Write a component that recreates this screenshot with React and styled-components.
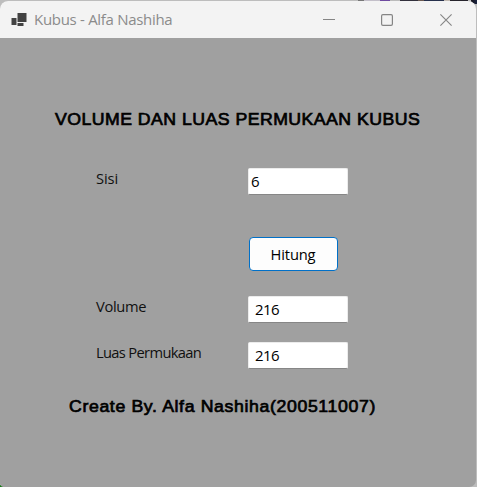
import React from "react";
import styled, { createGlobalStyle } from "styled-components";

const GlobalStyle = createGlobalStyle`
  * { box-sizing: border-box; }
  html, body { margin: 0; padding: 0; }
  body { overflow: hidden; background: #bdbdbd; }
`;

const Desktop = styled.main`
  width: 477px;
  height: 487px;
  padding: 1px 1px 0 0;
  background:
    linear-gradient(#127a12, #127a12) 0 100% / 3px 2px no-repeat,
    linear-gradient(90deg, #17141c, #1a2440) 100% 0 / 6px 4px no-repeat,
    linear-gradient(90deg, #777 0 6px, #c3bfc9 6px 22px, #6f4ba0 22px 32px, #bbb 32px 42px, #32303c 42px 60px, #6b5a52 60px 66px, #26304c 66px 86px, #c0b8b0 86px 92px, #26242c 92px 110px) 358px 0 / 110px 1px no-repeat,
    #bdbdbd;
`;

const Window = styled.section`
  display: flex;
  flex-direction: column;
  width: 476px;
  height: 486px;
  overflow: hidden;
  border-radius: 8px 8px 7px 4px;
  background: #a0a0a0;
  font-family: "Open Sans", "Noto Sans", sans-serif;
`;

const TitleBar = styled.header`
  display: flex;
  align-items: center;
  flex: none;
  height: 37px;
  padding: 0 1px 0 10px;
  background: #f3f3f3;
  color: #8b8b8b;
`;

const AppIcon = styled.svg`
  flex: none;
  width: 17px;
  height: 16px;
  margin-right: 7px;
`;

const Caption = styled.h1`
  flex: 1;
  margin: 0;
  padding-bottom: 2px;
  font-size: 15px;
  font-weight: 400;
  line-height: 20px;
  letter-spacing: -0.3px;
  white-space: nowrap;
`;

const WindowButton = styled.button`
  display: grid;
  place-items: center;
  width: 58.5px;
  height: 37px;
  padding: 0;
  border: 0;
  background: transparent;
  color: #858585;
`;

const Form = styled.form`
  display: flex;
  flex-direction: column;
  flex: 1;
`;

const Heading = styled.div`
  height: 20px;
  margin: ${(p) => p.$margin};
  color: #000;
  font-family: "Liberation Sans", Arial, sans-serif;
  font-size: 17px;
  font-weight: 400;
  line-height: 20px;
  letter-spacing: ${(p) => p.$spacing}px;
  -webkit-text-stroke: 0.7px #000;
  white-space: nowrap;
  transform: scaleX(1.04);
  transform-origin: 0 0;
`;

const Row = styled.div`
  display: grid;
  grid-template-columns: 152px 100px;
  height: 27px;
  margin: ${(p) => p.$top}px 0 0 96px;
`;

const Label = styled.label`
  color: #101010;
  font-size: 14.7px;
  line-height: 20px;
  letter-spacing: ${(p) => p.$spacing}px;
  white-space: nowrap;
`;

const Field = styled.input`
  width: 100px;
  height: 27px;
  padding: 0 0 2px ${(p) => p.$indent}px;
  border: 1px solid #ececec;
  border-bottom-color: #868686;
  border-radius: 2px;
  outline: 0;
  background: #fff;
  color: #000;
  font: 15px "Open Sans", sans-serif;
  letter-spacing: -0.6px;
`;

const SubmitButton = styled.button`
  width: 89px;
  height: 34px;
  margin: 42px 0 0 249px;
  padding: 0 1px 1px 0;
  border: 1px solid #0070c8;
  border-radius: 4px;
  background: #fdfdfd;
  color: #000;
  font: 14.7px "Open Sans", sans-serif;
  letter-spacing: -0.15px;
`;

export default function App() {
  return (
    <>
      <GlobalStyle />
      <Desktop>
        <Window>
          <TitleBar>
            <AppIcon viewBox="0 0 17 16">
              <path fill="#424242" d="M7.5 1h9v9h-9zM1.5 6h5v7h-5zM7.5 11h6v3h-6z" />
            </AppIcon>
            <Caption>Kubus - Alfa Nashiha</Caption>
            <WindowButton aria-label="Minimize">
              <svg width="12" height="12"><path d="M0 5.5h12" stroke="currentColor" /></svg>
            </WindowButton>
            <WindowButton aria-label="Maximize">
              <svg width="12" height="12">
                <rect x=".6" y=".6" width="10.8" height="10.8" rx="1.3" fill="none" stroke="currentColor" strokeWidth="1.2" />
              </svg>
            </WindowButton>
            <WindowButton aria-label="Close">
              <svg width="12" height="12"><path d="M.4.4l11.2 11.2M11.6.4L.4 11.6" stroke="currentColor" strokeWidth="1.1" /></svg>
            </WindowButton>
          </TitleBar>
          <Form onSubmit={(e) => e.preventDefault()}>
            <Heading $margin="72px 0 0 55px" $spacing={0.45}>VOLUME DAN LUAS PERMUKAAN KUBUS</Heading>
            <Row $top={38}>
              <Label htmlFor="sisi" $spacing={-0.1}>Sisi</Label>
              <Field id="sisi" $indent={2} defaultValue="6" />
            </Row>
            <SubmitButton type="submit">Hitung</SubmitButton>
            <Row $top={25}>
              <Label htmlFor="volume" $spacing={-0.35}>Volume</Label>
              <Field id="volume" $indent={6} defaultValue="216" />
            </Row>
            <Row $top={19}>
              <Label htmlFor="luas" $spacing={-0.66}>Luas Permukaan</Label>
              <Field id="luas" $indent={6} defaultValue="216" />
            </Row>
            <Heading $margin="28px 0 0 69px" $spacing={0.61}>Create By. Alfa Nashiha(200511007)</Heading>
          </Form>
        </Window>
      </Desktop>
    </>
  );
}
